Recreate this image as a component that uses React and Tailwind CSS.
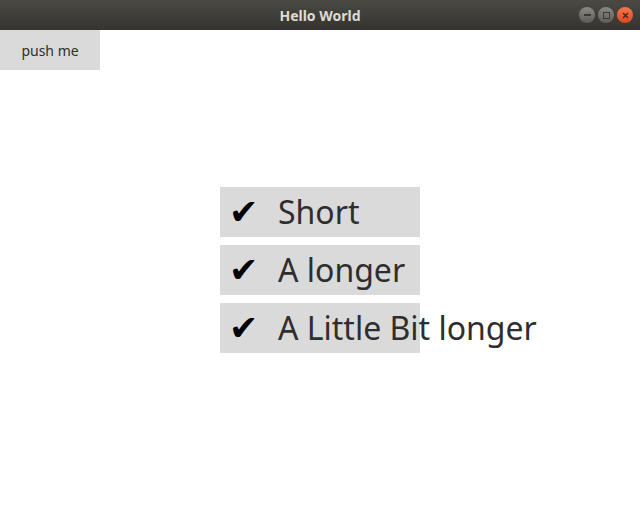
const rows = ["Short", "A longer", "A Little Bit longer"];

function TitleBar() {
  return (
    <div className="relative flex h-[30px] items-center justify-center bg-gradient-to-b from-[#4a4944] to-[#353430]">
      <span className="text-[14px] font-bold text-[#dfdbd2] [font-family:'Noto_Sans',sans-serif]">
        Hello World
      </span>
      <div className="absolute right-[7px] top-[7px] flex gap-[3px]">
        <div className="flex h-[16px] w-[16px] items-center justify-center rounded-full bg-gradient-to-b from-[#8a8985] to-[#5e5d59]">
          <div className="h-[1.5px] w-[7px] bg-[#3a3935]" />
        </div>
        <div className="flex h-[16px] w-[16px] items-center justify-center rounded-full bg-gradient-to-b from-[#8a8985] to-[#5e5d59]">
          <div className="h-[7px] w-[7px] border border-[#3a3935]" />
        </div>
        <div className="flex h-[16px] w-[16px] items-center justify-center rounded-full bg-gradient-to-b from-[#f7764a] to-[#e0461d]">
          <svg width="7" height="7" viewBox="0 0 7 7">
            <path d="M1 1 L6 6 M6 1 L1 6" stroke="#3a2a25" strokeWidth="1.4" />
          </svg>
        </div>
      </div>
    </div>
  );
}

export default function App() {
  return (
    <div className="h-[510px] w-[640px] overflow-hidden bg-white [font-family:'Noto_Sans',sans-serif]">
      <TitleBar />
      <button className="flex h-[40px] w-[100px] items-center justify-center bg-[#dadada] text-[14px] text-[#2e2e2e]">
        push me
      </button>
      <div className="mt-[117px] flex flex-col gap-[8px] pl-[220px]">
        {rows.map((r) => (
          <div key={r} className="flex h-[50px] w-[200px] items-center bg-[#dadada]">
            <span className="ml-[9px] w-[49px] shrink-0 text-[35px] leading-none text-black [font-family:'DejaVu_Sans',sans-serif]">
              ✔
            </span>
            <span className="shrink-0 whitespace-nowrap text-[32px] leading-none text-[#2e2e2e]">{r}</span>
          </div>
        ))}
      </div>
    </div>
  );
}
